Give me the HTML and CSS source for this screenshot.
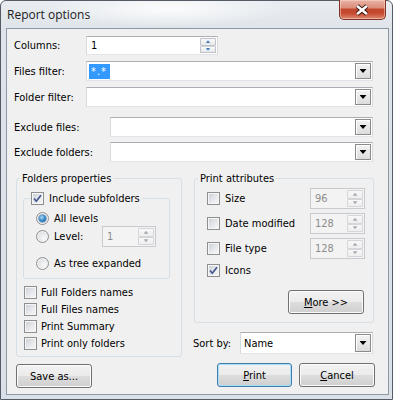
FILE: index.html
```html
<!DOCTYPE html>
<html>
<head>
<meta charset="utf-8">
<link rel="stylesheet" href="styles.css">
</head>
<body>
<div class="window">
  <div class="titlebar">
    <span class="title">Report options</span>
    <div class="close">
      <svg width="47" height="20" viewBox="0 0 47 20"><path d="M18.5 6 L28.5 14 M28.5 6 L18.5 14" stroke="#3a1a14" stroke-width="4.6" fill="none"/><path d="M18.5 6 L28.5 14 M28.5 6 L18.5 14" stroke="#ffffff" stroke-width="2.6" fill="none"/></svg>
    </div>
  </div>
  <div class="client">
    <div class="row r1">
      <span class="lbl w1">Columns:</span>
      <div class="spin s-columns"><span class="val">1</span><div class="sbtns"><span class="sb up"></span><span class="sb dn"></span></div></div>
    </div>
    <div class="row r2">
      <span class="lbl w1">Files filter:</span>
      <div class="combo c-wide"><span class="val"><span class="sel">*.*</span></span><span class="dd"></span></div>
    </div>
    <div class="row r3">
      <span class="lbl w1">Folder filter:</span>
      <div class="combo c-wide"><span class="val"></span><span class="dd"></span></div>
    </div>
    <div class="row r4">
      <span class="lbl w2">Exclude files:</span>
      <div class="combo c-ex"><span class="val"></span><span class="dd"></span></div>
    </div>
    <div class="row r5">
      <span class="lbl w2">Exclude folders:</span>
      <div class="combo c-ex"><span class="val"></span><span class="dd"></span></div>
    </div>

    <div class="cols">
      <div class="col col-left">
        <div class="group g-left">
          <div class="legend">Folders properties</div>
          <div class="inner">
            <div class="ilegend"><span class="cb"><svg width="11" height="11" viewBox="0 0 11 11"><path d="M2 5.5 L4.3 8.2 L9 2.3" stroke="#42588f" stroke-width="1.7" fill="none"/></svg></span><span class="ctext">Include subfolders</span></div>
            <div class="rrow rr1"><span class="rb on"></span><span class="rtext">All levels</span></div>
            <div class="rrow rr2"><span class="rb"></span><span class="rtext rl">Level:</span>
              <div class="spin dis s-level"><span class="val">1</span><div class="sbtns"><span class="sb up"></span><span class="sb dn"></span></div></div>
            </div>
            <div class="rrow rr3"><span class="rb"></span><span class="rtext">As tree expanded</span></div>
          </div>
          <div class="crow first"><span class="cb"></span><span class="ctext">Full Folders names</span></div>
          <div class="crow"><span class="cb"></span><span class="ctext">Full Files names</span></div>
          <div class="crow"><span class="cb"></span><span class="ctext">Print Summary</span></div>
          <div class="crow"><span class="cb"></span><span class="ctext">Print only folders</span></div>
        </div>
        <div class="btn b-save">Save as...</div>
      </div>

      <div class="col col-right">
        <div class="group g-right">
          <div class="legend">Print attributes</div>
          <div class="arow ar1"><span class="cb"></span><span class="atext">Size</span>
            <div class="spin dis s-attr"><span class="val">96</span><div class="sbtns"><span class="sb up"></span><span class="sb dn"></span></div></div>
          </div>
          <div class="arow"><span class="cb"></span><span class="atext">Date modified</span>
            <div class="spin dis s-attr"><span class="val">128</span><div class="sbtns"><span class="sb up"></span><span class="sb dn"></span></div></div>
          </div>
          <div class="arow"><span class="cb"></span><span class="atext">File type</span>
            <div class="spin dis s-attr"><span class="val">128</span><div class="sbtns"><span class="sb up"></span><span class="sb dn"></span></div></div>
          </div>
          <div class="arow icons"><span class="cb"><svg width="11" height="11" viewBox="0 0 11 11"><path d="M2 5.5 L4.3 8.2 L9 2.3" stroke="#42588f" stroke-width="1.7" fill="none"/></svg></span><span class="atext">Icons</span></div>
          <div class="btn b-more"><span><u>M</u>ore &gt;&gt;</span></div>
        </div>
        <div class="row sortrow">
          <span class="lbl w3">Sort by:</span>
          <div class="combo c-sort"><span class="val">Name</span><span class="dd"></span></div>
        </div>
        <div class="btnrow">
          <div class="btn b-print def"><span><u>P</u>rint</span></div>
          <div class="btn b-cancel"><span><u>C</u>ancel</span></div>
        </div>
      </div>
    </div>
  </div>
</div>
</body>
</html>
```

FILE: styles.css
```css
* { box-sizing: border-box; }

body {
  margin: 0;
  background: #ffffff;
  font-family: "DejaVu Sans Condensed", "DejaVu Sans", sans-serif;
  font-stretch: condensed;
  font-size: 11px;
  color: #000000;
}

.window {
  width: 393px;
  height: 400px;
  border: 1px solid #545b64;
  border-radius: 6px 6px 0 0;
  background: linear-gradient(180deg, #e9edf1 0px, #dfe4ea 28px, #d9e0e8 100%);
  display: flex;
  flex-direction: column;
  padding: 0 3px 4px 5px;
}

.titlebar {
  height: 27px;
  display: flex;
  align-items: center;
  padding-left: 1px;
  background: radial-gradient(ellipse 120px 18px at 160px 8px, rgba(255,255,255,0.85), rgba(255,255,255,0) 100%);
}

.title {
  font-family: "Open Sans", "Liberation Sans", sans-serif;
  font-stretch: normal;
  font-size: 12px;
  color: #1b1b1b;
  flex: 1;
}

.close {
  align-self: flex-start;
  margin-top: -1px;
  margin-right: 3px;
  width: 47px;
  height: 20px;
  border: 1px solid #7d3326;
  border-top: none;
  border-radius: 0 0 5px 5px;
  background: linear-gradient(180deg, #eab3a5 0%, #dc8f7b 40%, #c4462d 50%, #c54a30 70%, #dd8b70 100%);
  box-shadow: inset 0 0 0 1px rgba(255,220,210,0.5);
  display: flex;
  align-items: center;
  justify-content: center;
}
.close svg { display: block; margin-left: -1px; }

.client {
  flex: 1;
  border: 1px solid #8d98a5;
  background: #f0f0f0;
  padding: 7px 15px 0 7px;
}

.row { display: flex; align-items: center; }
.r2, .r3 { margin-top: 6px; }
.r4 { margin-top: 10px; }
.r5 { margin-top: 5px; }

.lbl { flex: none; }
.w1 { width: 72px; }
.w2 { width: 96px; }
.w3 { width: 47px; margin-left: -1px; }

.val { padding-left: 3px; flex: 1; white-space: nowrap; }

.combo {
  display: flex;
  align-items: center;
  height: 20px;
  border: 1px solid #abadb3;
  border-color: #abadb3 #d6d9de #e0e3e8 #d6d9de;
  background: #ffffff;
  padding: 0 1px 0 0;
}
.c-wide { width: 287px; }
.c-ex { width: 263px; }
.c-sort { width: 133px; height: 22px; }

.sel {
  display: inline-block;
  background: #3399ff;
  color: #ffffff;
  padding: 0 3px 0 2px;
  letter-spacing: 1px;
  line-height: 15px;
  margin-left: -1px;
}

.dd {
  flex: none;
  width: 16px;
  height: 16px;
  border: 1px solid #8b8b8b;
  background: linear-gradient(180deg, #f4f4f4, #dcdcdc);
  box-shadow: inset 1px 1px 0 #ffffff;
  display: flex;
  align-items: center;
  justify-content: center;
}
.c-sort .dd { height: 18px; }
.dd::after {
  content: "";
  width: 7px;
  height: 4px;
  background: #000000;
  clip-path: polygon(0 0, 100% 0, 50% 100%);
}

.spin {
  display: flex;
  align-items: center;
  height: 19px;
  border: 1px solid #abadb3;
  border-color: #abadb3 #d6d9de #e0e3e8 #d6d9de;
  background: #ffffff;
  padding: 1px;
}
.s-columns { width: 132px; }
.s-level { width: 54px; height: 21px; }
.s-attr { width: 55px; height: 21px; }

.spin.dis {
  background: #f3f3f3;
  border-color: #c7cacf;
  color: #8c8c8c;
}

.sbtns {
  flex: none;
  width: 16px;
  height: 100%;
  display: flex;
  flex-direction: column;
}
.sb {
  flex: 1;
  border: 1px solid #bfc3c8;
  border-radius: 1px;
  background: linear-gradient(180deg, #fafafa, #e6e8eb);
  display: flex;
  align-items: center;
  justify-content: center;
}
.sb + .sb { border-top-color: #d2d5d9; }
.sb::after {
  content: "";
  width: 5px;
  height: 3px;
  background: #4f80c2;
}
.sb.up::after { clip-path: polygon(50% 0, 100% 100%, 0 100%); }
.sb.dn::after { clip-path: polygon(0 0, 100% 0, 50% 100%); }
.dis .sb { border-color: #d4d6d9; background: linear-gradient(180deg, #f8f8f8, #eeeeee); }
.dis .sb::after { background: #a9acb0; }

.cols {
  display: flex;
  margin-top: 16px;
  margin-left: 2px;
  gap: 12px;
}
.col { display: flex; flex-direction: column; flex: none; }
.col-left { width: 166px; }
.col-right { width: 181px; }

.group {
  border: 1px solid #d5dfe5;
  border-radius: 3px;
  display: flex;
  flex-direction: column;
}
.g-left { padding-bottom: 4px; }
.g-right { width: 180px; padding-bottom: 8px; }

.legend {
  align-self: flex-start;
  margin: -7px 0 0 3px;
  padding: 0 2px;
  line-height: 13px;
  background: #f0f0f0;
}

.inner {
  margin: 13px 0 0 6px;
  width: 147px;
  border: 1px solid #d5dfe5;
  border-radius: 3px;
  padding-bottom: 6px;
  display: flex;
  flex-direction: column;
}
.ilegend {
  align-self: flex-start;
  display: flex;
  align-items: center;
  height: 13px;
  margin: -7px 0 0 7px;
  padding-right: 2px;
  background: #f0f0f0;
}
.ilegend .ctext { margin-left: 5px; }

.cb {
  flex: none;
  width: 13px;
  height: 13px;
  border: 1px solid #8e8f8f;
  background: linear-gradient(135deg, #c9cdd3 0%, #e9ebee 60%, #f7f7f7 100%);
  box-shadow: inset 0 0 0 1px #f6f6f6;
  display: flex;
  align-items: center;
  justify-content: center;
}
.cb svg { display: block; }

.rb {
  flex: none;
  width: 13px;
  height: 13px;
  border: 1px solid #8e8f8f;
  border-radius: 50%;
  background: radial-gradient(circle at 65% 65%, #f8f8f8 0%, #e2e4e7 60%, #c6cad0 100%);
  box-shadow: inset 0 0 0 1px #f4f4f4;
  display: flex;
  align-items: center;
  justify-content: center;
}
.rb.on::after {
  content: "";
  width: 7px;
  height: 7px;
  border-radius: 50%;
  background: radial-gradient(circle at 40% 35%, #b6ddf7 0%, #3d8fd1 45%, #1d5391 100%);
  box-shadow: 0 0 0 0.5px #2a5f98;
}

.rrow { display: flex; align-items: center; margin-left: 12px; }
.rtext { margin-left: 5px; }
.rr1 { margin-top: 5px; height: 16px; }
.rr2 { height: 21px; }
.rr3 { margin-top: 8px; height: 17px; }
.rl { width: 48px; flex: none; }

.crow { display: flex; align-items: center; height: 17px; margin-left: 7px; }
.crow.first { margin-top: 5px; }
.ctext { margin-left: 4px; white-space: nowrap; }

.arow { display: flex; align-items: center; height: 21px; margin-left: 12px; margin-top: 4px; }
.arow.ar1 { margin-top: 3px; }
.arow.icons { height: 17px; margin-top: 3px; }
.atext { margin-left: 5px; width: 85px; flex: none; }

.btn {
  height: 24px;
  border: 1px solid #707070;
  border-radius: 3px;
  background: linear-gradient(180deg, #f2f2f2 0%, #ebebeb 48%, #dddddd 52%, #cfcfcf 100%);
  box-shadow: inset 0 0 0 1px #fbfbfb;
  display: flex;
  align-items: center;
  justify-content: center;
  white-space: nowrap;
}
.btn u { text-decoration: underline; text-underline-offset: 1px; }
.b-save { margin-top: 7px; width: 76px; }
.b-more { align-self: flex-start; margin: 11px 0 0 93px; width: 76px; }
.sortrow { margin-top: 9px; }
.btnrow { display: flex; margin-top: 9px; }
.b-print { margin-left: 23px; width: 75px; }
.b-cancel { margin-left: 7px; width: 76px; }
.btn.def {
  border-color: #3c7fb1;
  box-shadow: inset 0 0 0 1px #a9dcf6;
}
```
